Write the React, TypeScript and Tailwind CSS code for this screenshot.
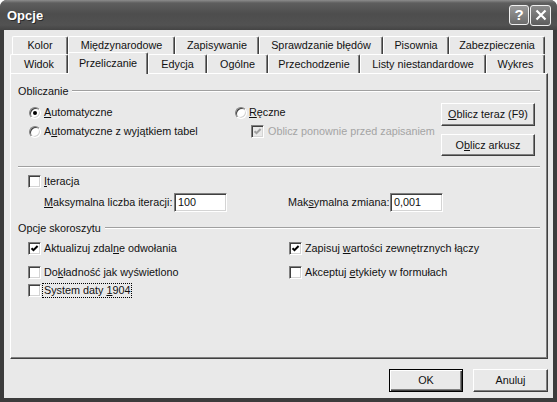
import clsx from "clsx";

const backRow = [
  { label: "Kolor", w: "w-[56px]" },
  { label: "Międzynarodowe", w: "w-[107px]" },
  { label: "Zapisywanie", w: "w-[84px]" },
  { label: "Sprawdzanie błędów", w: "w-[124px]" },
  { label: "Pisownia", w: "w-[66px]" },
  { label: "Zabezpieczenia", w: "w-[96px]" },
];

const frontRow = [
  { label: "Widok", w: "w-[58px]" },
  { label: "Przeliczanie", w: "w-[80px]", active: true },
  { label: "Edycja", w: "w-[59px]" },
  { label: "Ogólne", w: "w-[61px]" },
  { label: "Przechodzenie", w: "w-[92px]" },
  { label: "Listy niestandardowe", w: "w-[126px]" },
  { label: "Wykres", w: "w-[59px]" },
];

function Tab({ label, w, active }: { label: string; w: string; active?: boolean }) {
  return (
    <div
      className={clsx(
        "flex shrink-0 items-center justify-center rounded-t-[2px] border-t border-l border-r border-t-white border-l-white border-r-[#404040] bg-[#e9e9e9] shadow-[inset_-1px_0_0_#808080]",
        w,
        active ? "relative z-10 -mt-[2px] -mb-[1px] h-[22px] pb-[1px]" : "h-full"
      )}
    >
      {label}
    </div>
  );
}

function Check({ checked, disabled }: { checked?: boolean; disabled?: boolean }) {
  return (
    <span
      className={clsx(
        "relative inline-block size-[13px] shrink-0 border border-t-[#808080] border-l-[#808080] border-b-white border-r-white shadow-[inset_1px_1px_0_#404040,inset_-1px_-1px_0_#d4d4d4]",
        disabled ? "bg-[#e9e9e9]" : "bg-white"
      )}
    >
      {checked && (
        <svg viewBox="0 0 13 13" className="absolute -top-px -left-px size-[13px]">
          <path
            d="M3.5 6.2 L5.5 8.2 L9.6 4"
            fill="none"
            stroke={disabled ? "#a0a0a0" : "#000"}
            strokeWidth="2"
          />
        </svg>
      )}
    </span>
  );
}

function Radio({ checked }: { checked?: boolean }) {
  return (
    <span className="relative inline-block size-[12px] shrink-0 rounded-full border border-t-[#808080] border-l-[#808080] border-b-white border-r-white bg-white shadow-[inset_1px_1px_0_#404040,inset_-1px_-1px_0_#d4d4d4]">
      {checked && <span className="absolute top-[3px] left-[3px] size-[4px] rounded-full bg-black" />}
    </span>
  );
}

function Button({ children, className, isDefault }: { children: React.ReactNode; className: string; isDefault?: boolean }) {
  return (
    <div
      className={clsx(
        "flex items-center justify-center bg-[#e9e9e9]",
        isDefault
          ? "border border-black shadow-[inset_1px_1px_0_#fff,inset_-1px_-1px_0_#404040,inset_-2px_-2px_0_#808080]"
          : "border border-t-white border-l-white border-b-[#404040] border-r-[#404040] shadow-[inset_-1px_-1px_0_#808080]",
        className
      )}
    >
      {children}
    </div>
  );
}

function Field({ value, className }: { value: string; className: string }) {
  return (
    <div
      className={clsx(
        "flex h-[19px] items-center border border-t-[#808080] border-l-[#808080] border-b-white border-r-white bg-white pl-[3px] shadow-[inset_1px_1px_0_#404040,inset_-1px_-1px_0_#d4d4d4]",
        className
      )}
    >
      {value}
    </div>
  );
}

function GroupLabel({ children }: { children: React.ReactNode }) {
  return (
    <div className="flex h-[14px] items-center">
      <span className="whitespace-nowrap">{children}</span>
      <div className="ml-[4px] h-0 flex-1 border-t border-b border-t-[#a0a0a0] border-b-white" />
    </div>
  );
}

export default function App() {
  return (
    <div className="flex h-[402px] w-[557px] flex-col rounded-t-[7px] bg-[#3c3c3c] font-['Liberation_Sans',Arial,sans-serif] text-[10.8px] leading-[13px] text-[#111]">
      {/* title bar */}
      <div className="flex h-[30px] shrink-0 items-center rounded-t-[7px] bg-[linear-gradient(to_bottom,#8c8c8c_0px,#5e5e5e_3px,#4d4d4d_14px,#525252_25px,#444444_30px)] pr-[6px] pl-[7px]">
        <span className="text-[13px] font-bold text-white [text-shadow:1px_1px_#2a2a2a]">Opcje</span>
        <div className="ml-auto flex gap-[1px]">
          <div className="flex size-[20px] items-center justify-center rounded-[3px] border border-[#f0f0f0] bg-[linear-gradient(to_bottom,#9a9a9a,#6c6c6c)] text-[15px] font-bold text-white">
            ?
          </div>
          <div className="flex size-[21px] items-center justify-center rounded-[3px] border border-[#f0f0f0] bg-[linear-gradient(to_bottom,#8a8a8a,#5e5e5e)]">
            <svg viewBox="0 0 12 12" className="size-[12px]">
              <path d="M1.5 1.5 L10.5 10.5 M10.5 1.5 L1.5 10.5" stroke="#fff" strokeWidth="2.2" />
            </svg>
          </div>
        </div>
      </div>

      {/* dialog body */}
      <div className="mx-[4px] mb-[4px] flex flex-1 flex-col bg-[#e9e9e9]">
        <div className="mt-[6px] ml-[6px] w-[538px]">
          <div className="flex h-[18px] pl-[2px]">
            {backRow.map((t) => (
              <Tab key={t.label} label={t.label} w={t.w} />
            ))}
          </div>
          <div className="flex h-[19px]">
            {frontRow.map((t) => (
              <Tab key={t.label} label={t.label} w={t.w} active={t.active} />
            ))}
          </div>

          {/* panel */}
          <div className="h-[286px] border border-t-white border-l-white border-r-[#404040] border-b-[#404040] px-[7px] pt-[10px] shadow-[inset_-1px_-1px_0_#808080]">
            <GroupLabel>Obliczanie</GroupLabel>

            <div className="flex h-[68px]">
              <div className="ml-[11px] flex w-[206px] flex-col pt-[5px]">
                <div className="flex h-[19px] items-center">
                  <Radio checked />
                  <span className="ml-[3px]">
                    <u>A</u>utomatyczne
                  </span>
                </div>
                <div className="flex h-[19px] items-center">
                  <Radio />
                  <span className="ml-[3px]">
                    A<u>u</u>tomatyczne z wyjątkiem tabel
                  </span>
                </div>
              </div>
              <div className="flex w-[206px] flex-col pt-[5px]">
                <div className="flex h-[19px] items-center">
                  <Radio />
                  <span className="ml-[2px]">
                    <u>R</u>ęczne
                  </span>
                </div>
                <div className="flex h-[19px] items-center pl-[16px]">
                  <Check checked disabled />
                  <span className="ml-[4px] whitespace-nowrap text-[#a4a4a4]">Oblicz ponownie przed zapisaniem</span>
                </div>
              </div>
              <div className="flex flex-col gap-[8px] pt-[5px]">
                <Button className="h-[23px] w-[94px]">
                  <span>
                    <u>O</u>blicz teraz (F9)
                  </span>
                </Button>
                <Button className="h-[22px] w-[94px]">
                  <span>
                    O<u>b</u>licz arkusz
                  </span>
                </Button>
              </div>
            </div>

            <div className="h-0 border-t border-b border-t-[#a0a0a0] border-b-white" />

            <div className="mt-[4px] ml-[10px] flex h-[18px] items-center">
              <Check />
              <span className="ml-[3px]">
                <u>I</u>teracja
              </span>
            </div>

            <div className="mt-[3px] ml-[26px] flex h-[19px] items-center">
              <span className="w-[130px] shrink-0 whitespace-nowrap">
                <u>M</u>aksymalna liczba iteracji:
              </span>
              <Field value="100" className="w-[53px]" />
              <span className="ml-[61px] w-[102px] shrink-0 whitespace-nowrap">
                Mak<u>s</u>ymalna zmiana:
              </span>
              <Field value="0,001" className="w-[53px]" />
            </div>

            <div className="mt-[9px]">
              <GroupLabel>Opcje skoroszytu</GroupLabel>
            </div>

            <div className="ml-[10px] grid grid-cols-[261px_1fr]">
              <div className="mt-[4px] flex h-[18px] items-center">
                <Check checked />
                <span className="ml-[3px]">
                  Aktualizuj zdal<u>n</u>e odwołania
                </span>
              </div>
              <div className="mt-[4px] flex h-[18px] items-center">
                <Check checked />
                <span className="ml-[3px]">
                  Zapisuj <u>w</u>artości zewnętrznych łączy
                </span>
              </div>
              <div className="mt-[6px] flex h-[18px] items-center">
                <Check />
                <span className="ml-[3px]">
                  Do<u>k</u>ładność jak wyświetlono
                </span>
              </div>
              <div className="mt-[6px] flex h-[18px] items-center">
                <Check />
                <span className="ml-[3px]">
                  Akceptuj <u>e</u>tykiety w formułach
                </span>
              </div>
              <div className="flex h-[18px] items-center">
                <Check />
                <span className="ml-[1px] border border-dotted border-black px-[1px]">
                  System daty <u>1</u>904
                </span>
              </div>
            </div>
          </div>
        </div>

        <div className="mt-[10px] ml-[6px] flex w-[538px] justify-end gap-[10px]">
          <Button isDefault className="h-[23px] w-[74px]">
            OK
          </Button>
          <Button className="h-[23px] w-[75px]">Anuluj</Button>
        </div>
      </div>
    </div>
  );
}
